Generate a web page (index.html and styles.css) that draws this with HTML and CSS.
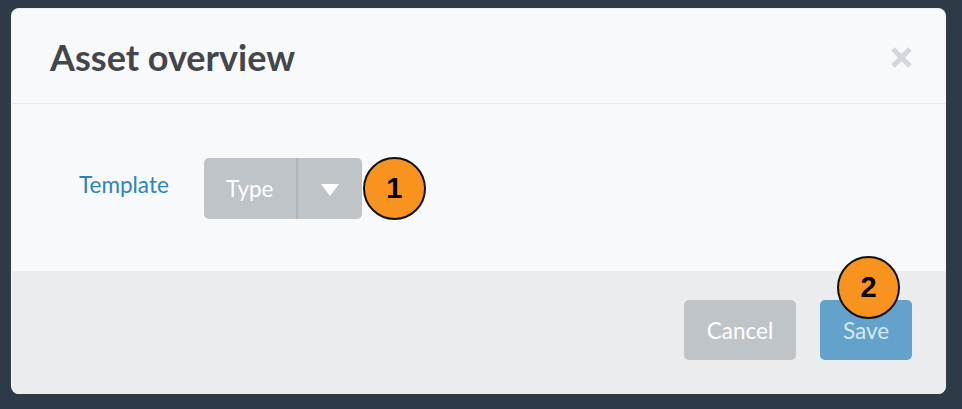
FILE: index.html
```html
<!DOCTYPE html>
<html>
<head>
<meta charset="utf-8">
<link rel="stylesheet" href="styles.css">
</head>
<body>
<div class="modal">
  <div class="modal-header">
    <h1 class="title">Asset overview</h1>
    <svg class="close" width="23" height="23" viewBox="0 0 23 23"><path d="M3 3 L20 20 M20 3 L3 20" stroke="#d3d6da" stroke-width="5" stroke-linecap="butt"/></svg>
  </div>
  <div class="modal-body">
    <span class="label">Template</span>
    <div class="btn-group">
      <span class="btn-type">Type</span>
      <span class="btn-caret"><svg width="18" height="12" viewBox="0 0 18 12"><path d="M0 0 L18 0 L9 12 Z" fill="#fff"/></svg></span>
    </div>
    <span class="badge badge-1">1</span>
  </div>
  <div class="modal-footer">
    <button class="btn btn-cancel">Cancel</button>
    <button class="btn btn-save">Save<span class="badge badge-2">2</span></button>
  </div>
</div>
</body>
</html>
```
FILE: styles.css
```css
html, body {
  margin: 0;
  padding: 0;
}
body {
  background: #2e3a48;
  width: 962px;
  height: 409px;
  font-family: Lato, "Noto Sans", sans-serif;
  overflow: hidden;
}
.modal {
  margin: 8px 0 0 11px;
  width: 935px;
  height: 386px;
  border-radius: 8px;
  background: #f8f9fb;
  display: flex;
  flex-direction: column;
  overflow: hidden;
  box-sizing: border-box;
  border-left: 1px solid #ffffff;
  border-top: 1px solid #eceef0;
}
.modal-header {
  height: 95px;
  border-bottom: 1px solid #e6e8eb;
  display: flex;
  align-items: center;
  justify-content: space-between;
  padding: 0 33px 0 38px;
  box-sizing: border-box;
  flex: none;
}
.title {
  margin: 0;
  font-size: 36px;
  font-weight: 700;
  color: #444649;
  position: relative;
  top: 1px;
}
.close {
  display: block;
  position: relative;
  top: 1px;
}
.modal-body {
  height: 167px;
  flex: none;
  display: flex;
  align-items: center;
  padding: 0 0 0 67px;
  box-sizing: border-box;
  position: relative;
}
.label {
  color: #2c83c1;
  font-size: 22.5px;
  margin-right: 35px;
  position: relative;
  top: -3px;
}
.btn-group {
  display: flex;
  height: 61px;
  border-radius: 5px;
  overflow: hidden;
  background: #bfc4c8;
  position: relative;
  top: 1px;
}
.btn-type {
  width: 92px;
  display: flex;
  align-items: center;
  justify-content: center;
  color: #fff;
  font-size: 22.5px;
  border-right: 2px solid #aeb5bc;
}
.btn-caret {
  width: 64px;
  display: flex;
  align-items: center;
  justify-content: center;
}
.btn-caret svg {
  display: block;
  position: relative;
  top: 1px;
}
.badge {
  width: 63px;
  height: 63px;
  box-sizing: border-box;
  border-radius: 50%;
  background: #f7931e;
  border: 2px solid #111;
  color: #000;
  font-family: "Liberation Sans", Arial, sans-serif;
  font-weight: 700;
  font-size: 29px;
  display: flex;
  align-items: center;
  justify-content: center;
}
.badge-1 {
  margin-left: 1px;
  position: relative;
  top: 1px;
}
.modal-footer {
  flex: 1;
  background: #ebecee;
  display: flex;
  justify-content: flex-end;
  align-items: flex-start;
  padding: 29px 34px 0 0;
  gap: 24px;
}
.btn {
  height: 60px;
  border: none;
  border-radius: 5px;
  font-family: Lato, "Noto Sans", sans-serif;
  font-size: 22.5px;
  color: #fff;
  padding: 0;
  position: relative;
}
.btn-cancel {
  width: 112px;
  background: #bfc4c8;
}
.btn-save {
  width: 92px;
  background: #63a3cb;
  color: #d7e8f4;
}
.badge-2 {
  position: absolute;
  left: 17px;
  top: -44px;
}
```
